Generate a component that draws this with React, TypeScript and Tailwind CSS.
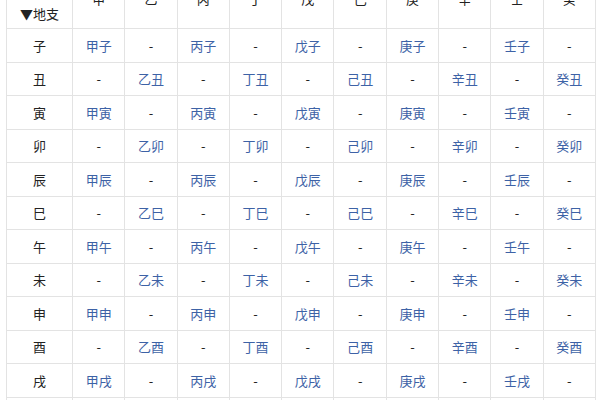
const stems = ["甲", "乙", "丙", "丁", "戊", "己", "庚", "辛", "壬", "癸"];
const branches = ["子", "丑", "寅", "卯", "辰", "巳", "午", "未", "申", "酉", "戌", "亥"];

export default function App() {
  return (
    <div
      className="w-[600px] h-[400px] overflow-hidden bg-white"
      style={{ fontFamily: '"Noto Sans CJK SC", "Noto Sans", sans-serif' }}
    >
      <table className="ml-[6px] mt-[-6px] table-fixed border-collapse w-[589px] text-[13px] text-[#222]">
        <colgroup>
          <col className="w-[66px]" />
          {stems.map((s) => (
            <col key={s} className="w-[52.3px]" />
          ))}
        </colgroup>
        <thead>
          <tr className="h-[34px]">
            <th className="border border-[#e3e3e3] font-normal text-center align-middle pt-[4px]">
              ▼地支
            </th>
            {stems.map((s) => (
              <th
                key={s}
                className="border border-[#e3e3e3] font-normal text-center align-top leading-[17px] p-0"
              >
                <span className="block -mt-[5px]">{s}</span>
              </th>
            ))}
          </tr>
        </thead>
        <tbody>
          {branches.map((b, bi) => (
            <tr key={b} className="h-[33.5px]">
              <td className="border border-[#e3e3e3] text-center">{b}</td>
              {stems.map((s, si) => (
                <td key={s} className="border border-[#e3e3e3] text-center">
                  {si % 2 === bi % 2 ? (
                    <span className="text-[#3d62a6]">
                      {s}
                      {b}
                    </span>
                  ) : (
                    "-"
                  )}
                </td>
              ))}
            </tr>
          ))}
        </tbody>
      </table>
    </div>
  );
}
